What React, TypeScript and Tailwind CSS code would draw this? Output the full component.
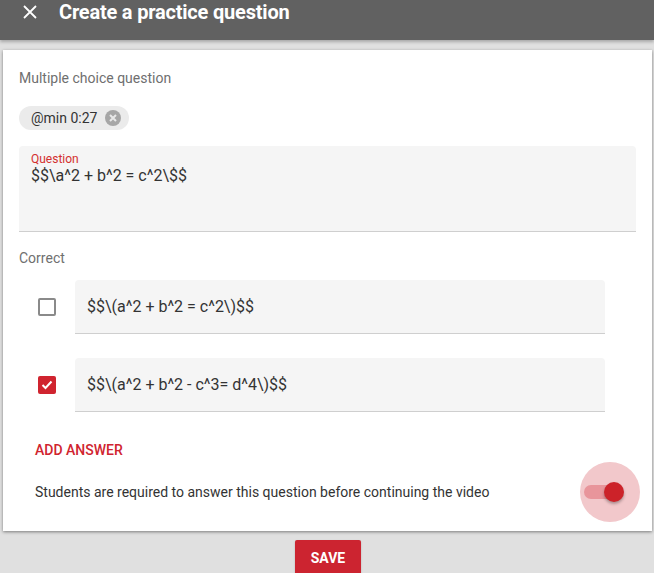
import React from "react";

// Answer options shown in the form
interface Answer {
  text: string;
  correct: boolean;
}

const answers: Answer[] = [
  { text: "$$\\(a^2 + b^2 = c^2\\)$$", correct: false },
  { text: "$$\\(a^2 + b^2 - c^3= d^4\\)$$", correct: true },
];

const CloseIcon = () => (
  <svg width="14" height="14" viewBox="0 0 14 14" fill="none">
    <path d="M1 1L13 13M13 1L1 13" stroke="white" strokeWidth="1.8" />
  </svg>
);

const ChipCancel = () => (
  <svg width="16" height="16" viewBox="0 0 16 16">
    <circle cx="8" cy="8" r="8" fill="#a6a6a6" />
    <path d="M5 5L11 11M11 5L5 11" stroke="#e8e8e8" strokeWidth="2" />
  </svg>
);

const Checkbox = ({ checked }: { checked: boolean }) =>
  checked ? (
    <div className="w-[18px] h-[18px] rounded-[2px] bg-[#d0242f] flex items-center justify-center">
      <svg width="12" height="10" viewBox="0 0 12 10" fill="none">
        <path d="M1.5 5L4.5 8L10.5 1.5" stroke="white" strokeWidth="2" />
      </svg>
    </div>
  ) : (
    <div className="w-[18px] h-[18px] rounded-[2px] border-2 border-[#8a8a8a]" />
  );

const App = () => {
  return (
    <div
      className="w-[654px] h-[573px] overflow-hidden bg-[#e0e0e0] flex flex-col"
      style={{ fontFamily: "Roboto, 'Liberation Sans', sans-serif" }}
    >
      <header className="h-10 shrink-0 bg-[#616161] flex items-center shadow-[0_2px_3px_rgba(0,0,0,0.25)] relative z-10">
        <div className="w-[59px] flex justify-center pl-[1px] -mt-[16px]">
          <CloseIcon />
        </div>
        <h1 className="text-white text-[20px] font-bold tracking-[-0.2px] -mt-[16px]">
          Create a practice question
        </h1>
      </header>

      <main className="mt-[10px] ml-[3px] mr-[2px] bg-white shadow-[0_1px_3px_rgba(0,0,0,0.45)] px-4 pt-[18px] pb-[29px]">
        <p className="text-[14px] leading-5 text-[#6f6f6f]">
          Multiple choice question
        </p>

        <div className="mt-[18px] inline-flex items-center h-6 rounded-full bg-[#ebebeb] pl-3 pr-2 gap-[8px]">
          <span className="text-[14px] text-[#333]">@min 0:27</span>
          <ChipCancel />
        </div>

        <div className="mt-4 h-[86px] bg-[#f5f5f5] rounded-t-[4px] border-b border-[#cfcfcf] px-3 pt-[6px]">
          <div className="text-[12px] leading-[14px] text-[#d32f2f]">Question</div>
          <div className="text-[16px] leading-5 text-[#333]">
            $$\a^2 + b^2 = c^2\$$
          </div>
        </div>

        <p className="mt-[16px] text-[14px] leading-5 text-[#6f6f6f]">Correct</p>

        <div className="mt-3 flex flex-col gap-[24px]">
          {answers.map((answer, index) => (
            <div key={index} className="flex items-center">
              <div className="w-[56px] pl-[19px]">
                <Checkbox checked={answer.correct} />
              </div>
              <div className="w-[530px] h-[54px] bg-[#f5f5f5] rounded-t-[4px] border-b border-[#cfcfcf] px-3 flex items-center">
                <span className="text-[16px] text-[#333]">{answer.text}</span>
              </div>
            </div>
          ))}
        </div>

        <button className="mt-[28px] ml-4 block text-[14px] leading-5 font-medium text-[#d0242f]">
          ADD ANSWER
        </button>

        <div className="mt-[22px] ml-4 flex items-center justify-between">
          <span className="text-[14px] leading-5 text-[#333]">
            Students are required to answer this question before continuing the video
          </span>
          <div className="relative w-[36px] h-5 mr-[16px] flex items-center">
            <div className="absolute -left-[4px] -top-[20px] w-[60px] h-[60px] rounded-full bg-[#f2c8cb]" />
            <div className="relative w-[34px] h-[14px] rounded-full bg-[#e8959b]" />
            <div className="absolute right-[-4px] top-0 w-5 h-5 rounded-full bg-[#cc2229] shadow-[0_2px_3px_rgba(0,0,0,0.3)]" />
          </div>
        </div>
      </main>

      <div className="mt-[9px] flex justify-center">
        <button className="w-[66px] h-9 ml-[2px] bg-[#cc2430] rounded-[2px] text-white text-[14px] font-bold shadow-[0_1px_2px_rgba(0,0,0,0.2)]">
          SAVE
        </button>
      </div>
    </div>
  );
};

export default App;
